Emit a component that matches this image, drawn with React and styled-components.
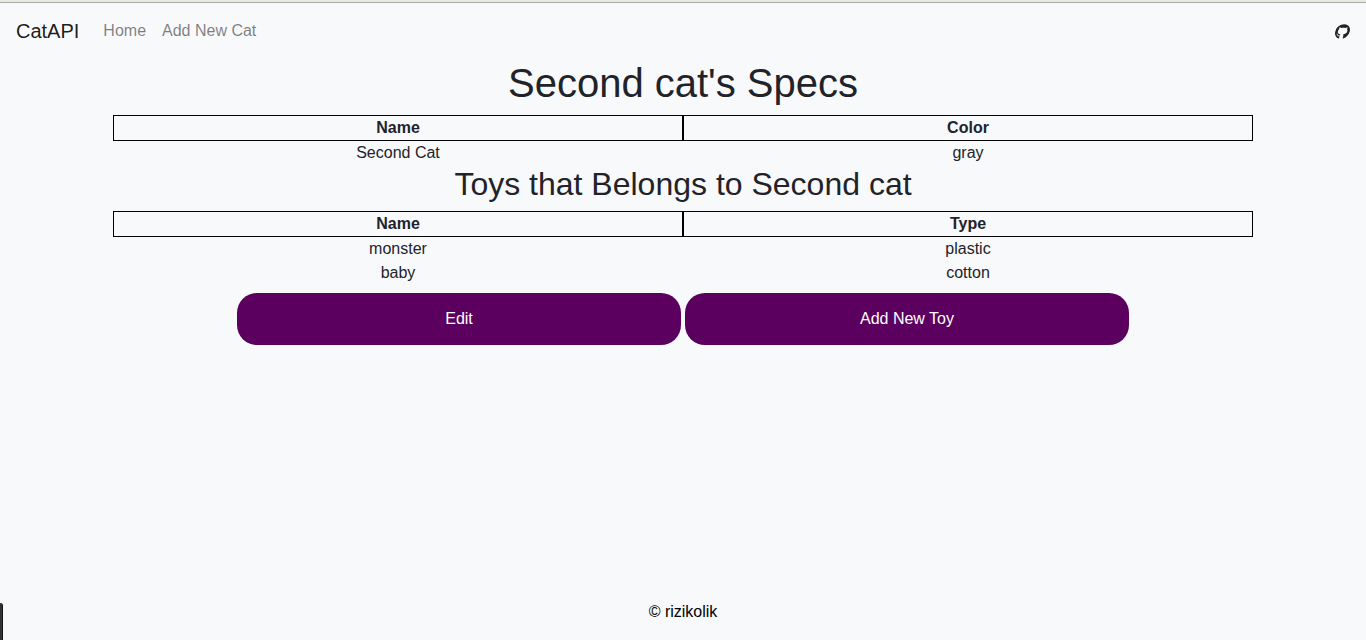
import React from "react";
import styled, { createGlobalStyle } from "styled-components";
import { FaGithub } from "react-icons/fa";

const GlobalStyle = createGlobalStyle`
  *, *::before, *::after { box-sizing: border-box; }
  body {
    margin: 0;
    background: #f8f9fb;
    color: #222329;
    font-family: "Liberation Sans", Arial, sans-serif;
    font-size: 16px;
    line-height: 24px;
  }
`;

const Page = styled.div`
  display: flex;
  flex-direction: column;
  min-height: 100vh;
`;

const TopEdge = styled.div`
  height: 3px;
  border-bottom: 1px solid #a9aaa7;
  background: #e8e8e4;
`;

const Navbar = styled.nav`
  display: flex;
  align-items: center;
  height: 56px;
  padding: 0 16px;
`;

const Brand = styled.a`
  margin-right: 16px;
  color: rgba(0, 0, 0, 0.9);
  font-size: 20px;
  line-height: 30px;
  text-decoration: none;
`;

const NavLink = styled.a`
  padding: 8px;
  color: rgba(0, 0, 0, 0.5);
  text-decoration: none;
`;

const IconLink = styled.a`
  display: flex;
  margin-left: auto;
  color: #222329;
`;

const SlantedGithub = styled(FaGithub)`
  width: 15px;
  height: 15px;
  transform: skewX(-14deg);
`;

const Main = styled.main`
  width: 100%;
  max-width: 1140px;
  margin: 0 auto;
  text-align: center;
`;

const Title = styled.h1`
  margin: 0 0 8px;
  font-size: 40px;
  font-weight: 500;
  line-height: 48px;
`;

const Subtitle = styled.h2`
  margin: 0 0 8px;
  font-size: 32px;
  font-weight: 500;
  line-height: 38px;
`;

const Table = styled.table`
  width: 100%;
  table-layout: fixed;
  border-spacing: 0;
`;

const HeadCell = styled.th`
  padding: 0;
  border: 1px solid #000;
  font-weight: 700;
`;

const Cell = styled.td`
  padding: 0;
`;

const Actions = styled.div`
  display: flex;
  justify-content: center;
  gap: 4px;
  margin-top: 8px;
`;

const ActionButton = styled.button`
  flex: 0 1 444px;
  padding: 14px 16px;
  border: 0;
  border-radius: 20px;
  background: #5c005f;
  color: #fff;
  font: inherit;
  cursor: pointer;
`;

const Footer = styled.footer`
  margin-top: auto;
  padding: 16px;
  color: #000;
  text-align: center;
`;

const SideHandle = styled.div`
  position: fixed;
  bottom: 0;
  left: 0;
  width: 3px;
  height: 37px;
  border-right: 1px solid #111;
  border-top-right-radius: 3px;
  background: #2e3436;
`;

function SpecTable({ columns, rows }) {
  return (
    <Table>
      <thead>
        <tr>
          {columns.map((column) => (
            <HeadCell key={column} scope="col">{column}</HeadCell>
          ))}
        </tr>
      </thead>
      <tbody>
        {rows.map((row) => (
          <tr key={row[0]}>
            {row.map((value) => (
              <Cell key={value}>{value}</Cell>
            ))}
          </tr>
        ))}
      </tbody>
    </Table>
  );
}

export default function App() {
  return (
    <>
      <GlobalStyle />
      <Page>
        <TopEdge />
        <Navbar>
          <Brand href="#">CatAPI</Brand>
          <NavLink href="#home">Home</NavLink>
          <NavLink href="#new-cat">Add New Cat</NavLink>
          <IconLink href="#github" aria-label="GitHub">
            <SlantedGithub />
          </IconLink>
        </Navbar>
        <Main>
          <Title>Second cat's Specs</Title>
          <SpecTable columns={["Name", "Color"]} rows={[["Second Cat", "gray"]]} />
          <Subtitle>Toys that Belongs to Second cat</Subtitle>
          <SpecTable
            columns={["Name", "Type"]}
            rows={[["monster", "plastic"], ["baby", "cotton"]]}
          />
          <Actions>
            <ActionButton type="button">Edit</ActionButton>
            <ActionButton type="button">Add New Toy</ActionButton>
          </Actions>
        </Main>
        <Footer>© rizikolik</Footer>
      </Page>
      <SideHandle />
    </>
  );
}
